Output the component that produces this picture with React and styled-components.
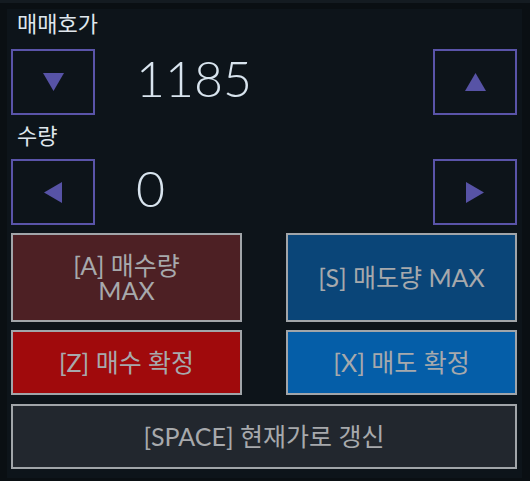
import styled, { createGlobalStyle } from "styled-components";

const GlobalStyle = createGlobalStyle`
  html, body {
    margin: 0;
    padding: 0;
    background: #0b1116;
  }
  body {
    font-family: Lato, "Noto Sans CJK KR", sans-serif;
  }
`;

const Frame = styled.div`
  width: 530px;
  height: 481px;
  box-sizing: border-box;
  padding: 9px 8px 3px 7px;
  background: #0a0f13;
  border-top: 3px solid #141b21;
`;

const Panel = styled.div`
  display: flex;
  flex-direction: column;
  height: 469px;
  box-sizing: border-box;
  margin-top: -3px;
  padding: 0 5px 8px 4px;
  background: #0d141a;
`;

const Label = styled.div`
  height: 30px;
  line-height: 30px;
  margin: ${(p) => p.$margin};
  padding-left: 6px;
  font-size: 22px;
  color: #dfe6ec;
`;

const StepRow = styled.div`
  display: flex;
  align-items: center;
  height: 66px;
`;

const ArrowBox = styled.button`
  display: flex;
  align-items: center;
  justify-content: center;
  width: 84px;
  height: 66px;
  box-sizing: border-box;
  padding: 0;
  border: 2px solid #5a54a9;
  background: transparent;
  cursor: pointer;
`;

const Value = styled.div`
  flex: 1;
  margin-left: 41px;
  margin-top: -8px;
  font-size: 50px;
  font-weight: 300;
  color: #d8e4ee;
`;

const ButtonGrid = styled.div`
  display: grid;
  grid-template-columns: 231px 231px;
  column-gap: 44px;
  grid-template-rows: 89px 65px 66px;
  row-gap: 8px;
  margin-top: 8px;
`;

const ActionButton = styled.button`
  display: flex;
  flex-direction: column;
  align-items: center;
  justify-content: center;
  grid-column: ${(p) => (p.$wide ? "1 / 3" : "auto")};
  margin-top: ${(p) => (p.$wide ? "1px" : "0")};
  padding: 0 20px;
  border: 2px solid #a1a5a9;
  background: ${(p) => p.$bg};
  color: #a7a9ac;
  font-family: Lato, "Noto Sans CJK KR", sans-serif;
  font-size: 25px;
  line-height: 25px;
  text-align: center;
  cursor: pointer;
`;

const ButtonLine = styled.span`
  display: block;
  height: 25px;
  overflow: visible;
`;

const Triangle = ({ dir }) => {
  const pts = {
    up: "0,18 10.5,0 21,18",
    down: "0,0 21,0 10.5,18",
    left: "18,0 18,21 0,10.5",
    right: "0,0 18,10.5 0,21",
  }[dir];
  const vertical = dir === "up" || dir === "down";
  return (
    <svg
      width={vertical ? 21 : 18}
      height={vertical ? 18 : 21}
      viewBox={vertical ? "0 0 21 18" : "0 0 18 21"}
    >
      <polygon points={pts} fill="#5753a6" />
    </svg>
  );
};

export default function App() {
  return (
    <>
      <GlobalStyle />
      <Frame>
        <Panel>
          <Label $margin="0 0 10px">매매호가</Label>
          <StepRow>
            <ArrowBox>
              <Triangle dir="down" />
            </ArrowBox>
            <Value>1185</Value>
            <ArrowBox>
              <Triangle dir="up" />
            </ArrowBox>
          </StepRow>
          <Label $margin="6px 0 8px">수량</Label>
          <StepRow>
            <ArrowBox>
              <Triangle dir="left" />
            </ArrowBox>
            <Value>0</Value>
            <ArrowBox>
              <Triangle dir="right" />
            </ArrowBox>
          </StepRow>
          <ButtonGrid>
            <ActionButton $bg="#4d2024">
              <ButtonLine>[A] 매수량</ButtonLine>
              <ButtonLine>MAX</ButtonLine>
            </ActionButton>
            <ActionButton $bg="#0a4578">[S] 매도량 MAX</ActionButton>
            <ActionButton $bg="#a00a0c">[Z] 매수 확정</ActionButton>
            <ActionButton $bg="#055ea8">[X] 매도 확정</ActionButton>
            <ActionButton $bg="#22272e" $wide>
              [SPACE] 현재가로 갱신
            </ActionButton>
          </ButtonGrid>
        </Panel>
      </Frame>
    </>
  );
}
